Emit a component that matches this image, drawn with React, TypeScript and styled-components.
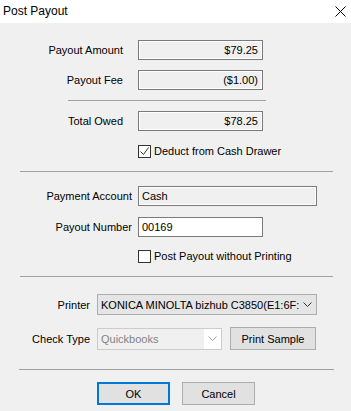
import { FC } from 'react';
import styled, { createGlobalStyle } from 'styled-components';

const GlobalStyle = createGlobalStyle`
	html, body {
		margin: 0;
		padding: 0;
		background: #f0f0f0;
	}
	* {
		box-sizing: border-box;
	}
	body {
		font-family: 'Segoe UI', 'Liberation Sans', Arial, sans-serif;
		font-size: 11px;
		color: #000;
	}
`;

const Window = styled.div`
	width: 351px;
	height: 411px;
	background: #f0f0f0;
	display: flex;
	flex-direction: column;
	overflow: hidden;
`;

const TitleBar = styled.div`
	display: flex;
	align-items: center;
	justify-content: space-between;
	height: 23px;
	padding: 0 5px 0 3px;
	background: #ffffff;
`;

const Title = styled.span`
	font-size: 12px;
	line-height: 23px;
`;

const CloseButton = styled.div`
	display: flex;
	width: 12px;
	height: 12px;
	align-items: center;
	justify-content: center;
`;

const Body = styled.div`
	display: flex;
	flex-direction: column;
	padding-top: 17px;
`;

const Row = styled.div<{ $top: number; $labelWidth: number; $gap: number }>`
	display: flex;
	align-items: center;
	margin-top: ${({ $top }) => $top}px;

	& > label {
		flex: 0 0 ${({ $labelWidth }) => $labelWidth}px;
		margin-right: ${({ $gap }) => $gap}px;
	}
`;

const Label = styled.label`
	text-align: right;
	white-space: nowrap;
	line-height: 16px;
`;

const ReadField = styled.div<{ $width: number; $align?: 'left' | 'right' }>`
	width: ${({ $width }) => $width}px;
	height: 20px;
	border: 1px solid #7a7a7a;
	box-shadow: inset 0 0 0 1px #ffffff;
	background: #f0f0f0;
	padding: 0 4px 0 3px;
	line-height: 18px;
	text-align: ${({ $align }) => $align || 'left'};
	white-space: nowrap;
`;

const InputField = styled.div<{ $width: number }>`
	width: ${({ $width }) => $width}px;
	height: 20px;
	border: 1px solid #7a7a7a;
	background: #ffffff;
	padding: 0 3px;
	line-height: 18px;
`;

const Separator = styled.div<{ $top: number; $left: number; $width: number }>`
	margin-top: ${({ $top }) => $top}px;
	margin-left: ${({ $left }) => $left}px;
	width: ${({ $width }) => $width}px;
	height: 1px;
	background: #a0a0a0;
`;

const CheckRow = styled.div<{ $top: number }>`
	display: flex;
	align-items: center;
	gap: 3px;
	margin-top: ${({ $top }) => $top}px;
	margin-left: 138px;
	height: 13px;
`;

const CheckBox = styled.div`
	display: flex;
	align-items: center;
	justify-content: center;
	width: 13px;
	height: 13px;
	border: 1px solid #333333;
	background: #ffffff;
`;

const CheckText = styled.span`
	line-height: 13px;
	white-space: nowrap;
`;

const Select = styled.div<{ $width: number; $disabled?: boolean }>`
	display: flex;
	align-items: center;
	width: ${({ $width }) => $width}px;
	height: ${({ $disabled }) => ($disabled ? 22 : 21)}px;
	border: 1px solid ${({ $disabled }) => ($disabled ? '#cccccc' : '#adadad')};
	background: ${({ $disabled }) => ($disabled ? '#f0f0f0' : '#e5e5e5')};
	color: ${({ $disabled }) => ($disabled ? '#838383' : '#000000')};
	overflow: hidden;
`;

const SelectText = styled.span`
	flex: 1;
	padding-left: 3px;
	white-space: nowrap;
	overflow: hidden;
`;

const SelectArrow = styled.span<{ $disabled?: boolean }>`
	display: flex;
	align-items: center;
	justify-content: center;
	flex: 0 0 17px;
	align-self: stretch;
	background: ${({ $disabled }) => ($disabled ? '#ffffff' : 'transparent')};
`;

const Button = styled.div<{ $width: number; $primary?: boolean }>`
	display: flex;
	align-items: center;
	justify-content: center;
	width: ${({ $width }) => $width}px;
	height: 23px;
	background: #e1e1e1;
	border: ${({ $primary }) => ($primary ? '2px solid #0078d7' : '1px solid #adadad')};
	white-space: nowrap;
`;

const ButtonRow = styled.div`
	display: flex;
	gap: 12px;
	margin-top: 12px;
	margin-left: 97px;
`;

const Chevron: FC<{ color: string }> = ({ color }) => (
	<svg width="9" height="5" viewBox="0 0 9 5">
		<path d="M0.5 0.5 L4.5 4.5 L8.5 0.5" fill="none" stroke={color} strokeWidth="1" />
	</svg>
);

const App: FC = () => (
	<>
		<GlobalStyle />
		<Window>
			<TitleBar>
				<Title>Post Payout</Title>
				<CloseButton>
					<svg width="11" height="11" viewBox="0 0 11 11">
						<path d="M0.5 0.5 L10.5 10.5 M10.5 0.5 L0.5 10.5" stroke="#000" strokeWidth="1" />
					</svg>
				</CloseButton>
			</TitleBar>
			<Body>
				<Row $top={0} $labelWidth={123} $gap={15}>
					<Label>Payout Amount</Label>
					<ReadField $width={125} $align="right">$79.25</ReadField>
				</Row>
				<Row $top={10} $labelWidth={123} $gap={15}>
					<Label>Payout Fee</Label>
					<ReadField $width={125} $align="right">($1.00)</ReadField>
				</Row>
				<Separator $top={10} $left={68} $width={198} />
				<Row $top={10} $labelWidth={123} $gap={15}>
					<Label>Total Owed</Label>
					<ReadField $width={125} $align="right">$78.25</ReadField>
				</Row>
				<CheckRow $top={14}>
					<CheckBox>
						<svg width="11" height="11" viewBox="0 0 11 11">
							<path d="M1.5 5.5 L4.5 8.5 L9.5 1.5" fill="none" stroke="#333" strokeWidth="1" />
						</svg>
					</CheckBox>
					<CheckText>Deduct from Cash Drawer</CheckText>
				</CheckRow>
				<Separator $top={13} $left={20} $width={313} />
				<Row $top={14} $labelWidth={132} $gap={6}>
					<Label>Payment Account</Label>
					<ReadField $width={179}>Cash</ReadField>
				</Row>
				<Row $top={11} $labelWidth={132} $gap={6}>
					<Label>Payout Number</Label>
					<InputField $width={125}>00169</InputField>
				</Row>
				<CheckRow $top={13}>
					<CheckBox />
					<CheckText>Post Payout without Printing</CheckText>
				</CheckRow>
				<Separator $top={13} $left={20} $width={313} />
				<Row $top={17} $labelWidth={90} $gap={7}>
					<Label>Printer</Label>
					<Select $width={220}>
						<SelectText>KONICA MINOLTA bizhub C3850(E1:6F:9</SelectText>
						<SelectArrow>
							<Chevron color="#333" />
						</SelectArrow>
					</Select>
				</Row>
				<Row $top={12} $labelWidth={90} $gap={7}>
					<Label>Check Type</Label>
					<Select $width={125} $disabled>
						<SelectText>Quickbooks</SelectText>
						<SelectArrow $disabled>
							<Chevron color="#a0a0a0" />
						</SelectArrow>
					</Select>
					<Button $width={86} style={{ marginLeft: 8 }}>Print Sample</Button>
				</Row>
				<Separator $top={19} $left={19} $width={315} />
				<ButtonRow>
					<Button $width={73} $primary>OK</Button>
					<Button $width={73}>Cancel</Button>
				</ButtonRow>
			</Body>
		</Window>
	</>
);

export default App;
